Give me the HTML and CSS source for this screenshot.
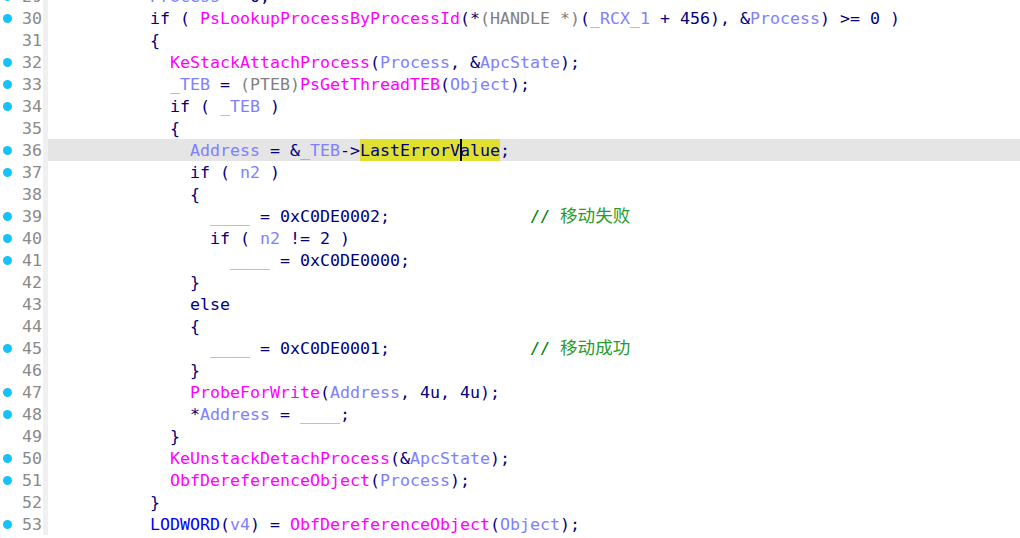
FILE: index.html
```html
<!DOCTYPE html>
<html>
<head>
<meta charset="utf-8">
<link rel="stylesheet" href="styles.css">
</head>
<body>
<div class="view">
<div class="row"><div class="gut"><span class="dot"></span><span class="num">29</span></div><div class="code">          <span class="v">Process</span><span class="k"> = 0;</span></div></div>
<div class="row"><div class="gut"><span class="dot"></span><span class="num">30</span></div><div class="code">          <span class="k">if ( </span><span class="f">PsLookupProcessByProcessId</span><span class="k">(*</span><span class="t">(HANDLE *)</span><span class="k">(</span><span class="v">_RCX_1</span><span class="k"> + 456), &amp;</span><span class="v">Process</span><span class="k">) &gt;= 0 )</span></div></div>
<div class="row"><div class="gut"><span class="nodot"></span><span class="num">31</span></div><div class="code">          <span class="k">{</span></div></div>
<div class="row"><div class="gut"><span class="dot"></span><span class="num">32</span></div><div class="code">            <span class="f">KeStackAttachProcess</span><span class="k">(</span><span class="v">Process</span><span class="k">, &amp;</span><span class="v">ApcState</span><span class="k">);</span></div></div>
<div class="row"><div class="gut"><span class="dot"></span><span class="num">33</span></div><div class="code">            <span class="v">_TEB</span><span class="k"> = </span><span class="t">(PTEB)</span><span class="f">PsGetThreadTEB</span><span class="k">(</span><span class="v">Object</span><span class="k">);</span></div></div>
<div class="row"><div class="gut"><span class="dot"></span><span class="num">34</span></div><div class="code">            <span class="k">if ( </span><span class="v">_TEB</span><span class="k"> )</span></div></div>
<div class="row"><div class="gut"><span class="nodot"></span><span class="num">35</span></div><div class="code">            <span class="k">{</span></div></div>
<div class="row current"><div class="gut"><span class="dot"></span><span class="num">36</span></div><div class="code">              <span class="v">Address</span><span class="k"> = &amp;</span><span class="v">_TEB</span><span class="k">-&gt;</span><span class="k hl">LastErrorV<span class="cursor"></span>alue</span><span class="k">;</span></div></div>
<div class="row"><div class="gut"><span class="dot"></span><span class="num">37</span></div><div class="code">              <span class="k">if ( </span><span class="v">n2</span><span class="k"> )</span></div></div>
<div class="row"><div class="gut"><span class="nodot"></span><span class="num">38</span></div><div class="code">              <span class="k">{</span></div></div>
<div class="row"><div class="gut"><span class="dot"></span><span class="num">39</span></div><div class="code">                <span class="v">____</span><span class="k"> = 0xC0DE0002;</span>              <span class="c">// <span class="cjk">移动失败</span></span></div></div>
<div class="row"><div class="gut"><span class="dot"></span><span class="num">40</span></div><div class="code">                <span class="k">if ( </span><span class="v">n2</span><span class="k"> != 2 )</span></div></div>
<div class="row"><div class="gut"><span class="dot"></span><span class="num">41</span></div><div class="code">                  <span class="v">____</span><span class="k"> = 0xC0DE0000;</span></div></div>
<div class="row"><div class="gut"><span class="nodot"></span><span class="num">42</span></div><div class="code">              <span class="k">}</span></div></div>
<div class="row"><div class="gut"><span class="nodot"></span><span class="num">43</span></div><div class="code">              <span class="k">else</span></div></div>
<div class="row"><div class="gut"><span class="nodot"></span><span class="num">44</span></div><div class="code">              <span class="k">{</span></div></div>
<div class="row"><div class="gut"><span class="dot"></span><span class="num">45</span></div><div class="code">                <span class="v">____</span><span class="k"> = 0xC0DE0001;</span>              <span class="c">// <span class="cjk">移动成功</span></span></div></div>
<div class="row"><div class="gut"><span class="nodot"></span><span class="num">46</span></div><div class="code">              <span class="k">}</span></div></div>
<div class="row"><div class="gut"><span class="dot"></span><span class="num">47</span></div><div class="code">              <span class="f">ProbeForWrite</span><span class="k">(</span><span class="v">Address</span><span class="k">, 4u, 4u);</span></div></div>
<div class="row"><div class="gut"><span class="dot"></span><span class="num">48</span></div><div class="code">              <span class="k">*</span><span class="v">Address</span><span class="k"> = </span><span class="v">____</span><span class="k">;</span></div></div>
<div class="row"><div class="gut"><span class="nodot"></span><span class="num">49</span></div><div class="code">            <span class="k">}</span></div></div>
<div class="row"><div class="gut"><span class="dot"></span><span class="num">50</span></div><div class="code">            <span class="f">KeUnstackDetachProcess</span><span class="k">(&amp;</span><span class="v">ApcState</span><span class="k">);</span></div></div>
<div class="row"><div class="gut"><span class="dot"></span><span class="num">51</span></div><div class="code">            <span class="f">ObfDereferenceObject</span><span class="k">(</span><span class="v">Process</span><span class="k">);</span></div></div>
<div class="row"><div class="gut"><span class="nodot"></span><span class="num">52</span></div><div class="code">          <span class="k">}</span></div></div>
<div class="row"><div class="gut"><span class="dot"></span><span class="num">53</span></div><div class="code">          <span class="m">LODWORD</span><span class="k">(</span><span class="v">v4</span><span class="k">) = </span><span class="f">ObfDereferenceObject</span><span class="k">(</span><span class="v">Object</span><span class="k">);</span></div></div>
</div>
</body>
</html>
```
FILE: styles.css
```css
html, body {
  margin: 0;
  padding: 0;
  background: #ffffff;
  overflow: hidden;
}
body {
  width: 1020px;
  height: 538px;
}
.view {
  margin-top: -15px;
  font-family: "DejaVu Sans Mono", "Liberation Mono", monospace;
  font-size: 16.61px;
  line-height: 24px;
}
.row {
  display: flex;
  height: 22px;
  overflow: hidden;
}
.gut {
  width: 43px;
  height: 22px;
  flex: none;
  display: flex;
  align-items: flex-start;
  background: #ffffff;
  border-right: 5px solid #f0f0f0;
}
.dot, .nodot {
  width: 9px;
  height: 9px;
  margin-top: 7px;
  margin-left: 3px;
  border-radius: 50%;
  flex: none;
}
.dot {
  background: #14c4f8;
}
.num {
  flex: 1;
  height: 22px;
  text-align: right;
  color: #8a8a8a;
  padding-right: 1px;
}
.code {
  flex: 1;
  height: 22px;
  white-space: pre;
  padding-left: 2px;
}
.current .code {
  background: #e5e5e5;
}
.k { color: #000080; }
.f { color: #ff00ff; }
.v { color: #8080ff; }
.t { color: #808080; }
.m { color: #0000ff; }
.c { color: #008000; }
.cjk {
  font-family: "Noto Sans CJK SC", sans-serif;
  font-size: 17.6px;
  line-height: 12px;
  color: #2a9a2a;
}
.hl {
  background: #e0e030;
  display: inline-block;
  height: 22px;
  vertical-align: top;
}
.cursor {
  display: inline-block;
  width: 0;
  height: 22px;
  border-left: 2px solid #000000;
  margin-right: -2px;
  vertical-align: top;
}
```
